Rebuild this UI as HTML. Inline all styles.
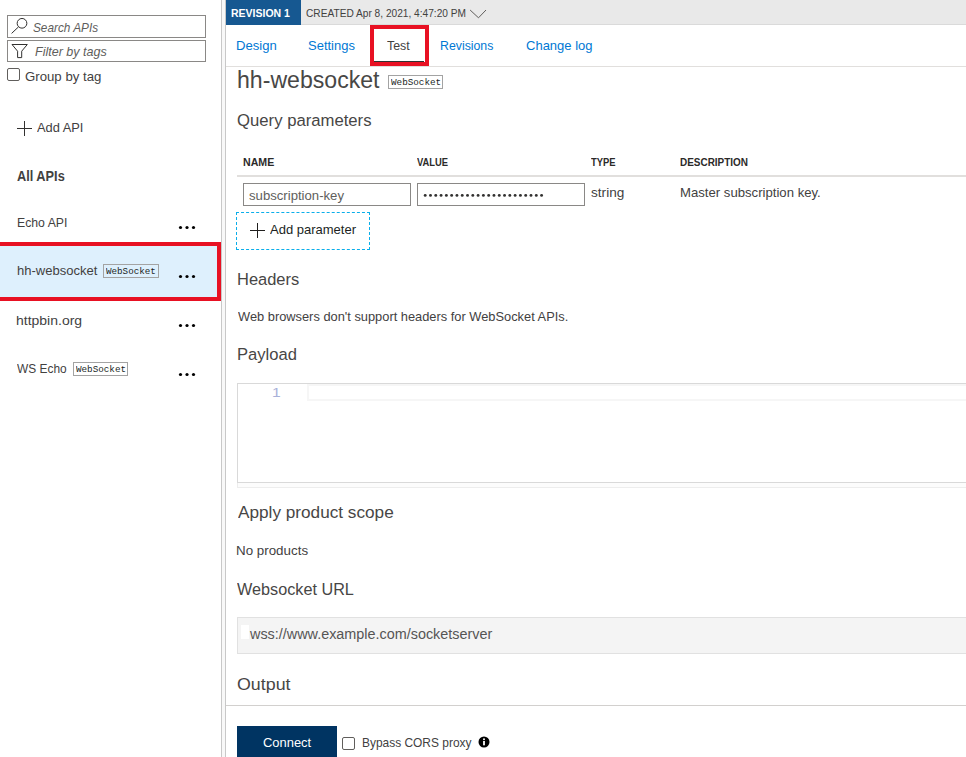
<!DOCTYPE html>
<html><head><meta charset="utf-8"><style>
html,body{margin:0;padding:0;width:966px;height:757px;overflow:hidden;background:#fff;font-family:"Liberation Sans",sans-serif;}
body>div,body>svg{position:absolute;}
</style></head><body>
<div style="left:7px;top:15px;width:199px;height:23px;border:1px solid #8a8886;box-sizing:border-box"></div>
<div style="left:7px;top:40px;width:199px;height:22px;border:1px solid #8a8886;box-sizing:border-box"></div>
<svg style="left:8px;top:16px" width="24" height="20" viewBox="0 0 24 20"><circle cx="14" cy="7.3" r="4.85" fill="none" stroke="#323130" stroke-width="1"/><line x1="10.5" y1="10.9" x2="3.6" y2="17.4" stroke="#323130" stroke-width="1"/></svg>
<div style="left:32.95px;top:21.00px;font-size:12.6px;line-height:14px;color:#605e5c;font-weight:400;font-style:italic;font-family:'Liberation Sans';white-space:pre;transform:scaleX(0.9373);transform-origin:0 0;">Search APIs</div>
<svg style="left:8px;top:40px" width="24" height="20" viewBox="0 0 24 20"><path d="M4 4.5 H19.3 L13.7 11.2 V17.6 H9.6 V11.2 Z" fill="none" stroke="#323130" stroke-width="1"/></svg>
<div style="left:35.02px;top:45.00px;font-size:12.6px;line-height:14px;color:#605e5c;font-weight:400;font-style:italic;font-family:'Liberation Sans';white-space:pre;transform:scaleX(0.9957);transform-origin:0 0;">Filter by tags</div>
<div style="left:7px;top:68px;width:13px;height:13px;border:1px solid #605e5c;border-radius:2px;box-sizing:border-box"></div>
<div style="left:24.84px;top:70.00px;font-size:12.7px;line-height:14px;color:#42413f;font-weight:400;font-style:normal;font-family:'Liberation Sans';white-space:pre;transform:scaleX(1.0411);transform-origin:0 0;">Group by tag</div>
<div style="left:17px;top:128px;width:15px;height:1px;background:#323130"></div>
<div style="left:24px;top:121px;width:1px;height:15px;background:#323130"></div>
<div style="left:36.80px;top:120.00px;font-size:13px;line-height:15px;color:#42413f;font-weight:400;font-style:normal;font-family:'Liberation Sans';white-space:pre;transform:scaleX(0.9878);transform-origin:0 0;">Add API</div>
<div style="left:16.88px;top:168.00px;font-size:14.3px;line-height:16px;color:#42413f;font-weight:700;font-style:normal;font-family:'Liberation Sans';white-space:pre;transform:scaleX(0.8924);transform-origin:0 0;">All APIs</div>
<div style="left:0px;top:242px;width:221px;height:59px;background:#e81123"></div>
<div style="left:0px;top:246px;width:217px;height:51px;background:#def0fd"></div>
<div style="left:16.92px;top:215.00px;font-size:13.2px;line-height:15px;color:#42413f;font-weight:400;font-style:normal;font-family:'Liberation Sans';white-space:pre;transform:scaleX(0.9287);transform-origin:0 0;">Echo API</div>
<div style="left:16.59px;top:263.00px;font-size:13.6px;line-height:15px;color:#42413f;font-weight:400;font-style:normal;font-family:'Liberation Sans';white-space:pre;transform:scaleX(0.9587);transform-origin:0 0;">hh-websocket</div>
<div style="left:16.22px;top:313.00px;font-size:13.5px;line-height:15px;color:#42413f;font-weight:400;font-style:normal;font-family:'Liberation Sans';white-space:pre;transform:scaleX(1.0361);transform-origin:0 0;">httpbin.org</div>
<div style="left:17.14px;top:361.00px;font-size:13.2px;line-height:15px;color:#42413f;font-weight:400;font-style:normal;font-family:'Liberation Sans';white-space:pre;transform:scaleX(0.9028);transform-origin:0 0;">WS Echo</div>
<svg style="left:170px;top:210px" width="40" height="180"><circle cx="10.5" cy="17.5" r="1.6" fill="#000"/><circle cx="17" cy="17.5" r="1.6" fill="#000"/><circle cx="23.5" cy="17.5" r="1.6" fill="#000"/><circle cx="10.5" cy="66.5" r="1.6" fill="#000"/><circle cx="17" cy="66.5" r="1.6" fill="#000"/><circle cx="23.5" cy="66.5" r="1.6" fill="#000"/><circle cx="10.5" cy="115.5" r="1.6" fill="#000"/><circle cx="17" cy="115.5" r="1.6" fill="#000"/><circle cx="23.5" cy="115.5" r="1.6" fill="#000"/><circle cx="10.5" cy="164.5" r="1.6" fill="#000"/><circle cx="17" cy="164.5" r="1.6" fill="#000"/><circle cx="23.5" cy="164.5" r="1.6" fill="#000"/></svg>
<div style="left:103px;top:264px;width:56px;height:14px;border:1px solid #a3a3a3;box-sizing:border-box"></div>
<div style="left:106.00px;top:266.00px;font-size:9.85px;line-height:11px;color:#201f1e;font-weight:400;font-style:normal;font-family:'Liberation Mono';white-space:pre;transform:scaleX(0.9376);transform-origin:0 0;">WebSocket</div>
<div style="left:73px;top:362px;width:55px;height:14px;border:1px solid #a3a3a3;box-sizing:border-box"></div>
<div style="left:75.80px;top:364.00px;font-size:9.85px;line-height:11px;color:#201f1e;font-weight:400;font-style:normal;font-family:'Liberation Mono';white-space:pre;transform:scaleX(0.9414);transform-origin:0 0;">WebSocket</div>
<div style="left:221px;top:0px;width:5px;height:757px;background:#f8f8f8;border-left:1px solid #c8c8c8;border-right:1px solid #c8c8c8;box-sizing:border-box"></div>
<div style="left:226px;top:0px;width:740px;height:25px;background:#e9e9e9;border-bottom:1px solid #dadada;box-sizing:border-box"></div>
<div style="left:226px;top:0px;width:75px;height:25px;background:#165891"></div>
<div style="left:231.42px;top:7.00px;font-size:11.3px;line-height:12px;color:#ffffff;font-weight:700;font-style:normal;font-family:'Liberation Sans';white-space:pre;transform:scaleX(0.9298);transform-origin:0 0;">REVISION 1</div>
<div style="left:305.59px;top:7.00px;font-size:11.3px;line-height:12px;color:#42413f;font-weight:400;font-style:normal;font-family:'Liberation Sans';white-space:pre;transform:scaleX(0.8983);transform-origin:0 0;">CREATED Apr 8, 2021, 4:47:20 PM</div>
<svg style="left:469px;top:8px" width="19" height="11" viewBox="0 0 19 11"><polyline points="1.1,2 9.5,9.8 17,2" fill="none" stroke="#605e5c" stroke-width="1"/></svg>
<div style="left:226px;top:66px;width:740px;height:1px;background:#e1dfdd"></div>
<div style="left:236.45px;top:38.00px;font-size:13.5px;line-height:15px;color:#0078d4;font-weight:400;font-style:normal;font-family:'Liberation Sans';white-space:pre;transform:scaleX(0.9718);transform-origin:0 0;">Design</div>
<div style="left:308.12px;top:38.00px;font-size:13.5px;line-height:15px;color:#0078d4;font-weight:400;font-style:normal;font-family:'Liberation Sans';white-space:pre;transform:scaleX(0.9618);transform-origin:0 0;">Settings</div>
<div style="left:374px;top:60.5px;width:50px;height:1.5px;background:#323130"></div>
<div style="left:386.65px;top:38.00px;font-size:13.2px;line-height:15px;color:#42413f;font-weight:400;font-style:normal;font-family:'Liberation Sans';white-space:pre;transform:scaleX(0.9401);transform-origin:0 0;">Test</div>
<div style="left:370px;top:25px;width:59px;height:41px;border:4px solid #e81123;box-sizing:border-box"></div>
<div style="left:440.41px;top:38.00px;font-size:13.2px;line-height:15px;color:#0078d4;font-weight:400;font-style:normal;font-family:'Liberation Sans';white-space:pre;transform:scaleX(0.9335);transform-origin:0 0;">Revisions</div>
<div style="left:525.85px;top:38.00px;font-size:13.2px;line-height:15px;color:#0078d4;font-weight:400;font-style:normal;font-family:'Liberation Sans';white-space:pre;transform:scaleX(0.9864);transform-origin:0 0;">Change log</div>
<div style="left:236.68px;top:67.00px;font-size:23.3px;line-height:26px;color:#484746;font-weight:400;font-style:normal;font-family:'Liberation Sans';white-space:pre;transform:scaleX(0.9916);transform-origin:0 0;">hh-websocket</div>
<div style="left:388px;top:75px;width:55px;height:14px;border:1px solid #a3a3a3;box-sizing:border-box"></div>
<div style="left:390.80px;top:77.00px;font-size:9.85px;line-height:11px;color:#201f1e;font-weight:400;font-style:normal;font-family:'Liberation Mono';white-space:pre;transform:scaleX(0.9433);transform-origin:0 0;">WebSocket</div>
<div style="left:237.05px;top:111.00px;font-size:16.7px;line-height:19px;color:#474645;font-weight:400;font-style:normal;font-family:'Liberation Sans';white-space:pre;">Query parameters</div>
<div style="left:243.01px;top:157.00px;font-size:10.3px;line-height:11px;color:#2b2a29;font-weight:700;font-style:normal;font-family:'Liberation Sans';white-space:pre;transform:scaleX(1.0290);transform-origin:0 0;">NAME</div>
<div style="left:417.25px;top:157.00px;font-size:10.3px;line-height:11px;color:#2b2a29;font-weight:700;font-style:normal;font-family:'Liberation Sans';white-space:pre;transform:scaleX(0.9101);transform-origin:0 0;">VALUE</div>
<div style="left:590.71px;top:157.00px;font-size:10.3px;line-height:11px;color:#2b2a29;font-weight:700;font-style:normal;font-family:'Liberation Sans';white-space:pre;transform:scaleX(0.9122);transform-origin:0 0;">TYPE</div>
<div style="left:680.05px;top:157.00px;font-size:10.3px;line-height:11px;color:#2b2a29;font-weight:700;font-style:normal;font-family:'Liberation Sans';white-space:pre;transform:scaleX(0.9665);transform-origin:0 0;">DESCRIPTION</div>
<div style="left:237px;top:175px;width:729px;height:2px;background:#e1dfdd"></div>
<div style="left:243px;top:183px;width:168px;height:23px;border:1px solid #8a8886;box-sizing:border-box"></div>
<div style="left:248.71px;top:188.00px;font-size:13.6px;line-height:15px;color:#605e5c;font-weight:400;font-style:normal;font-family:'Liberation Sans';white-space:pre;transform:scaleX(0.9668);transform-origin:0 0;">subscription-key</div>
<div style="left:417px;top:183px;width:168px;height:23px;border:1px solid #8a8886;box-sizing:border-box"></div>
<svg style="left:418px;top:188px" width="140" height="16"><circle cx="7.20" cy="7.4" r="1.45" fill="#323130"/><circle cx="12.49" cy="7.4" r="1.45" fill="#323130"/><circle cx="17.78" cy="7.4" r="1.45" fill="#323130"/><circle cx="23.07" cy="7.4" r="1.45" fill="#323130"/><circle cx="28.36" cy="7.4" r="1.45" fill="#323130"/><circle cx="33.65" cy="7.4" r="1.45" fill="#323130"/><circle cx="38.94" cy="7.4" r="1.45" fill="#323130"/><circle cx="44.23" cy="7.4" r="1.45" fill="#323130"/><circle cx="49.52" cy="7.4" r="1.45" fill="#323130"/><circle cx="54.81" cy="7.4" r="1.45" fill="#323130"/><circle cx="60.10" cy="7.4" r="1.45" fill="#323130"/><circle cx="65.39" cy="7.4" r="1.45" fill="#323130"/><circle cx="70.68" cy="7.4" r="1.45" fill="#323130"/><circle cx="75.97" cy="7.4" r="1.45" fill="#323130"/><circle cx="81.26" cy="7.4" r="1.45" fill="#323130"/><circle cx="86.55" cy="7.4" r="1.45" fill="#323130"/><circle cx="91.84" cy="7.4" r="1.45" fill="#323130"/><circle cx="97.13" cy="7.4" r="1.45" fill="#323130"/><circle cx="102.42" cy="7.4" r="1.45" fill="#323130"/><circle cx="107.71" cy="7.4" r="1.45" fill="#323130"/><circle cx="113.00" cy="7.4" r="1.45" fill="#323130"/><circle cx="118.29" cy="7.4" r="1.45" fill="#323130"/><circle cx="123.58" cy="7.4" r="1.45" fill="#323130"/></svg>
<div style="left:590.59px;top:185.00px;font-size:13.5px;line-height:15px;color:#42413f;font-weight:400;font-style:normal;font-family:'Liberation Sans';white-space:pre;transform:scaleX(1.0087);transform-origin:0 0;">string</div>
<div style="left:679.85px;top:185.00px;font-size:13.5px;line-height:15px;color:#42413f;font-weight:400;font-style:normal;font-family:'Liberation Sans';white-space:pre;transform:scaleX(0.9738);transform-origin:0 0;">Master subscription key.</div>
<div style="left:236px;top:212px;width:134px;height:38px;border:1px dashed #0aaeea;box-sizing:border-box"></div>
<div style="left:250px;top:230px;width:15px;height:1px;background:#201f1e"></div>
<div style="left:257px;top:223px;width:1px;height:15px;background:#201f1e"></div>
<div style="left:269.80px;top:222.00px;font-size:13.6px;line-height:15px;color:#201f1e;font-weight:400;font-style:normal;font-family:'Liberation Sans';white-space:pre;transform:scaleX(0.9566);transform-origin:0 0;">Add parameter</div>
<div style="left:236.58px;top:270.00px;font-size:16.7px;line-height:19px;color:#474645;font-weight:400;font-style:normal;font-family:'Liberation Sans';white-space:pre;transform:scaleX(0.9868);transform-origin:0 0;">Headers</div>
<div style="left:237.84px;top:309.00px;font-size:12.75px;line-height:15px;color:#42413f;font-weight:400;font-style:normal;font-family:'Liberation Sans';white-space:pre;transform:scaleX(1.0070);transform-origin:0 0;">Web browsers don't support headers for WebSocket APIs.</div>
<div style="left:236.57px;top:345.00px;font-size:16.7px;line-height:19px;color:#474645;font-weight:400;font-style:normal;font-family:'Liberation Sans';white-space:pre;transform:scaleX(0.9923);transform-origin:0 0;">Payload</div>
<div style="left:237px;top:383px;width:740px;height:100px;border:1px solid #d9d9d9;box-sizing:border-box"></div>
<div style="left:237px;top:483px;width:740px;height:5px;background:#fcfcfc;border:1px solid #ededed;border-top:none;box-sizing:border-box"></div>
<div style="left:307px;top:384px;width:700px;height:17px;border:2px solid #f6f6f6;box-sizing:border-box"></div>
<div style="left:272.43px;top:385.00px;font-size:13px;line-height:15px;color:#a9b1d9;font-weight:400;font-style:normal;font-family:'Liberation Sans';white-space:pre;transform:scaleX(1.2025);transform-origin:0 0;">1</div>
<div style="left:237.50px;top:503.00px;font-size:16.7px;line-height:19px;color:#474645;font-weight:400;font-style:normal;font-family:'Liberation Sans';white-space:pre;transform:scaleX(1.0296);transform-origin:0 0;">Apply product scope</div>
<div style="left:236.43px;top:544.00px;font-size:12.5px;line-height:14px;color:#42413f;font-weight:400;font-style:normal;font-family:'Liberation Sans';white-space:pre;transform:scaleX(1.0692);transform-origin:0 0;">No products</div>
<div style="left:237.12px;top:580.00px;font-size:16.8px;line-height:19px;color:#474645;font-weight:400;font-style:normal;font-family:'Liberation Sans';white-space:pre;transform:scaleX(0.9663);transform-origin:0 0;">Websocket URL</div>
<div style="left:237px;top:617px;width:740px;height:37px;background:#f4f4f4;border:1px solid #e1e1e1;box-sizing:border-box"></div>
<div style="left:241px;top:625px;width:8px;height:14px;background:#ffffff"></div>
<div style="left:250.20px;top:626.00px;font-size:14.9px;line-height:16px;color:#565554;font-weight:400;font-style:normal;font-family:'Liberation Sans';white-space:pre;transform:scaleX(0.9664);transform-origin:0 0;">wss://www.example.com/socketserver</div>
<div style="left:236.80px;top:675.00px;font-size:16.7px;line-height:19px;color:#474645;font-weight:400;font-style:normal;font-family:'Liberation Sans';white-space:pre;transform:scaleX(1.0677);transform-origin:0 0;">Output</div>
<div style="left:226px;top:705px;width:740px;height:1px;background:#d2d0ce"></div>
<div style="left:237px;top:726px;width:100px;height:31px;background:#003462"></div>
<div style="left:262.95px;top:735.00px;font-size:13.2px;line-height:15px;color:#ffffff;font-weight:400;font-style:normal;font-family:'Liberation Sans';white-space:pre;transform:scaleX(0.9798);transform-origin:0 0;">Connect</div>
<div style="left:342px;top:737px;width:13px;height:13px;border:1px solid #605e5c;border-radius:2px;box-sizing:border-box"></div>
<div style="left:361.85px;top:735.00px;font-size:13px;line-height:15px;color:#42413f;font-weight:400;font-style:normal;font-family:'Liberation Sans';white-space:pre;transform:scaleX(0.9182);transform-origin:0 0;">Bypass CORS proxy</div>
<svg style="left:478px;top:736px" width="12" height="12" viewBox="0 0 12 12"><circle cx="6" cy="6" r="5.5" fill="#000"/><rect x="5.1" y="5" width="1.8" height="4.3" fill="#fff"/><circle cx="6" cy="3.2" r="1" fill="#fff"/></svg>
</body></html>
